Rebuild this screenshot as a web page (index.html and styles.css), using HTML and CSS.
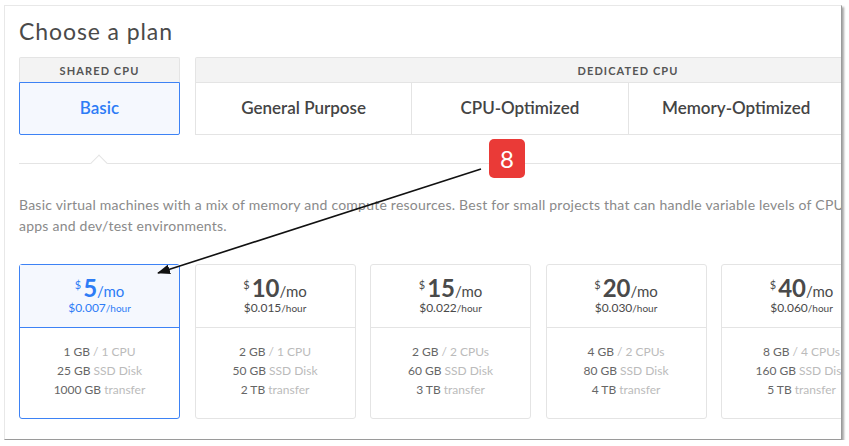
FILE: index.html
```html
<!DOCTYPE html>
<html>
<head>
<meta charset="utf-8">
<link rel="stylesheet" href="styles.css">
</head>
<body>
<div class="frame">
  <div class="content">
    <h1 class="title">Choose a plan</h1>
    <div class="tabs">
      <div class="group group-shared">
        <div class="group-head">SHARED CPU</div>
        <div class="group-tabs">
          <div class="tab active">Basic</div>
        </div>
      </div>
      <div class="group group-dedicated">
        <div class="group-head">DEDICATED CPU</div>
        <div class="group-tabs">
          <div class="tab">General Purpose</div>
          <div class="tab">CPU-Optimized</div>
          <div class="tab">Memory-Optimized</div>
          <div class="tab"></div>
        </div>
      </div>
    </div>
    <div class="divider"><span class="notch"></span></div>
    <p class="desc">Basic virtual machines with a mix of memory and compute resources. Best for small projects that can handle variable levels of CPU performance, like blogs, web<br>apps and dev/test environments.</p>
    <div class="cards">
      <div class="card selected">
        <div class="card-top">
          <div class="price"><span class="cur">$</span><span class="amt">5</span><span class="per">/mo</span></div>
          <div class="hourly">$0.007<span class="hr">/hour</span></div>
        </div>
        <div class="card-body">
          <div>1 GB <span class="mut">/ 1 CPU</span></div>
          <div>25 GB <span class="mut">SSD Disk</span></div>
          <div>1000 GB <span class="mut">transfer</span></div>
        </div>
      </div>
      <div class="card">
        <div class="card-top">
          <div class="price"><span class="cur">$</span><span class="amt">10</span><span class="per">/mo</span></div>
          <div class="hourly">$0.015<span class="hr">/hour</span></div>
        </div>
        <div class="card-body">
          <div>2 GB <span class="mut">/ 1 CPU</span></div>
          <div>50 GB <span class="mut">SSD Disk</span></div>
          <div>2 TB <span class="mut">transfer</span></div>
        </div>
      </div>
      <div class="card">
        <div class="card-top">
          <div class="price"><span class="cur">$</span><span class="amt">15</span><span class="per">/mo</span></div>
          <div class="hourly">$0.022<span class="hr">/hour</span></div>
        </div>
        <div class="card-body">
          <div>2 GB <span class="mut">/ 2 CPUs</span></div>
          <div>60 GB <span class="mut">SSD Disk</span></div>
          <div>3 TB <span class="mut">transfer</span></div>
        </div>
      </div>
      <div class="card">
        <div class="card-top">
          <div class="price"><span class="cur">$</span><span class="amt">20</span><span class="per">/mo</span></div>
          <div class="hourly">$0.030<span class="hr">/hour</span></div>
        </div>
        <div class="card-body">
          <div>4 GB <span class="mut">/ 2 CPUs</span></div>
          <div>80 GB <span class="mut">SSD Disk</span></div>
          <div>4 TB <span class="mut">transfer</span></div>
        </div>
      </div>
      <div class="card">
        <div class="card-top">
          <div class="price"><span class="cur">$</span><span class="amt">40</span><span class="per">/mo</span></div>
          <div class="hourly">$0.060<span class="hr">/hour</span></div>
        </div>
        <div class="card-body">
          <div>8 GB <span class="mut">/ 4 CPUs</span></div>
          <div>160 GB <span class="mut">SSD Disk</span></div>
          <div>5 TB <span class="mut">transfer</span></div>
        </div>
      </div>
    </div>
  </div>
  <svg class="annot" width="838" height="435" viewBox="0 0 838 435">
    <defs>
      <marker id="ah" markerWidth="13" markerHeight="10" refX="12" refY="5" orient="auto" markerUnits="userSpaceOnUse">
        <path d="M0,0 L13,5 L0,10 z" fill="#111"/>
      </marker>
    </defs>
    <line x1="476" y1="163" x2="153" y2="267" stroke="#111" stroke-width="1.6" marker-end="url(#ah)"/>
  </svg>
  <div class="badge">8</div>
</div>
</body>
</html>
```
FILE: styles.css
```css
* { box-sizing: border-box; }
html, body { margin: 0; padding: 0; background: #fff; }
body {
  padding: 5px 0 0 4px;
  font-family: "Lato", "Open Sans", sans-serif;
  color: #444;
}
.frame {
  position: relative;
  width: 838px;
  height: 435px;
  background: #fff;
  border: 1px solid #e8e8e8;
  border-right: 1px solid #9a9a9a;
  border-bottom: 1px solid #9a9a9a;
  box-shadow: 2px 2px 2px rgba(0,0,0,0.35);
  overflow: hidden;
}
.content {
  padding: 0 0 0 14px;
  width: 1100px;
}
.title {
  margin: 0;
  padding-top: 12px;
  font-size: 23px;
  font-weight: 400;
  color: #4a4a4a;
  line-height: 26px;
  letter-spacing: 0.9px;
}
.tabs {
  display: flex;
  gap: 15px;
  margin-top: 13px;
}
.group {
  display: flex;
  flex-direction: column;
}
.group-shared { width: 161px; }
.group-dedicated { width: 866px; }
.group-head {
  height: 25px;
  background: #f3f3f3;
  border: 1px solid #e4e4e4;
  border-bottom: none;
  font-size: 11px;
  font-weight: 700;
  letter-spacing: 1.1px;
  color: #555;
  display: flex;
  align-items: center;
  justify-content: center;
  border-radius: 2px 2px 0 0;
}
.group-tabs {
  display: flex;
}
.tab {
  flex: 1;
  height: 53px;
  border: 1px solid #e4e4e4;
  display: flex;
  align-items: center;
  justify-content: center;
  font-size: 17px;
  font-weight: 600;
  color: #444;
  background: #fff;
  padding-bottom: 2px;
}
.group-dedicated .tab + .tab { border-left: none; }
.tab.active {
  border: 1px solid #3d82f5;
  background: #f5f8fe;
  color: #2d7cf6;
  border-radius: 0 0 2px 2px;
}
.divider {
  position: relative;
  height: 1px;
  background: #e4e4e4;
  margin-top: 28px;
  width: 830px;
}
.notch {
  position: absolute;
  left: 74px;
  top: -6px;
  width: 12px;
  height: 12px;
  background: #fff;
  border-left: 1px solid #e4e4e4;
  border-top: 1px solid #e4e4e4;
  transform: rotate(45deg);
}
.desc {
  margin: 30px 0 0;
  width: 1100px;
  font-size: 14px;
  line-height: 21px;
  color: #8a8a8a;
  letter-spacing: 0.23px;
  white-space: nowrap;
}
.cards {
  display: flex;
  gap: 14.5px;
  margin-top: 28px;
}
.card {
  flex: 0 0 161px;
  height: 155px;
  border: 1px solid #e4e4e4;
  border-radius: 3px;
  text-align: center;
  background: #fff;
}
.card-top {
  height: 63px;
  border-bottom: 1px solid #e4e4e4;
  padding-top: 11px;
  color: #4a4a4a;
}
.price {
  display: flex;
  justify-content: center;
  align-items: flex-start;
  line-height: 24px;
  height: 24px;
}
.cur { font-size: 11px; line-height: 14px; margin-right: 2px; margin-top: 2px; }
.amt { font-size: 24px; font-weight: 700; }
.per { font-size: 15px; margin-top: 3px; }
.hourly {
  font-size: 12px;
  line-height: 14px;
  margin-top: 1px;
}
.hr { font-size: 10px; }
.card-body {
  padding-top: 14px;
  font-size: 12px;
  line-height: 19px;
  color: #666;
}
.mut { color: #bbb; }
.card.selected {
  border-color: #3d82f5;
}
.card.selected .card-top {
  background: #f5f8fe;
  border-bottom-color: #3d82f5;
  color: #2d7cf6;
}
.annot {
  position: absolute;
  left: 0;
  top: 0;
  pointer-events: none;
}
.badge {
  position: absolute;
  left: 484px;
  top: 133px;
  width: 36px;
  height: 39px;
  border-radius: 5px;
  background: #ea3a37;
  color: #fff;
  font-size: 24px;
  display: flex;
  align-items: center;
  justify-content: center;
}
```
